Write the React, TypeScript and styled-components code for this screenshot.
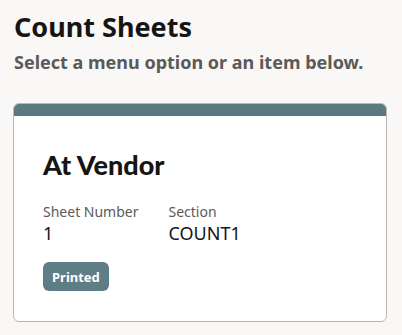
import React from 'react';
import styled, { createGlobalStyle } from 'styled-components';

const GlobalStyle = createGlobalStyle`
  html, body {
    margin: 0;
    padding: 0;
    background: #f9f8f7;
  }
  body {
    font-family: 'Noto Sans', 'Open Sans', sans-serif;
    color: #161513;
  }
`;

const PageS = styled.main`
  padding: 9px 15px 14px 13px;
`;

const TitleS = styled.h1`
  margin: 0 0 0 1px;
  font-size: 27px;
  line-height: 36px;
  font-weight: 700;
  color: #161513;
`;

const SubtitleS = styled.p`
  margin: 5px 0 0 1px;
  font-size: 18px;
  line-height: 25px;
  font-weight: 700;
  color: #5b5a58;
`;

const CardS = styled.section`
  margin-top: 28px;
  background: #fff;
  border: 1px solid #b9b8b6;
  border-radius: 6px;
  overflow: hidden;
`;

const CardBandS = styled.div`
  height: 12px;
  background: #5a7981;
`;

const CardBodyS = styled.div`
  padding: 32px 29px 30px;
`;

const CardTitleS = styled.h2`
  margin: 0;
  font-family: Lato, 'Noto Sans', sans-serif;
  font-size: 27px;
  line-height: 34px;
  font-weight: 900;
  color: #161513;
`;

const FieldsS = styled.div`
  display: flex;
  gap: 30px;
  margin-top: 20px;
`;

const FieldS = styled.div`
  display: flex;
  flex-direction: column;
`;

const LabelS = styled.span`
  font-size: 14px;
  line-height: 19px;
  color: #5b5a58;
`;

const ValueS = styled.span`
  font-size: 18px;
  line-height: 24px;
  color: #161513;
`;

const BadgeS = styled.span`
  display: inline-flex;
  align-items: center;
  margin-top: 17px;
  height: 29px;
  padding: 0 9px;
  border-radius: 6px;
  background: #5f7d84;
  color: #fff;
  font-size: 13px;
  font-weight: 700;
`;

export default function App() {
  return (
    <>
      <GlobalStyle />
      <PageS>
        <TitleS>Count Sheets</TitleS>
        <SubtitleS>Select a menu option or an item below.</SubtitleS>
        <CardS>
          <CardBandS />
          <CardBodyS>
            <CardTitleS>At Vendor</CardTitleS>
            <FieldsS>
              <FieldS>
                <LabelS>Sheet Number</LabelS>
                <ValueS>1</ValueS>
              </FieldS>
              <FieldS>
                <LabelS>Section</LabelS>
                <ValueS>COUNT1</ValueS>
              </FieldS>
            </FieldsS>
            <BadgeS>Printed</BadgeS>
          </CardBodyS>
        </CardS>
      </PageS>
    </>
  );
}
